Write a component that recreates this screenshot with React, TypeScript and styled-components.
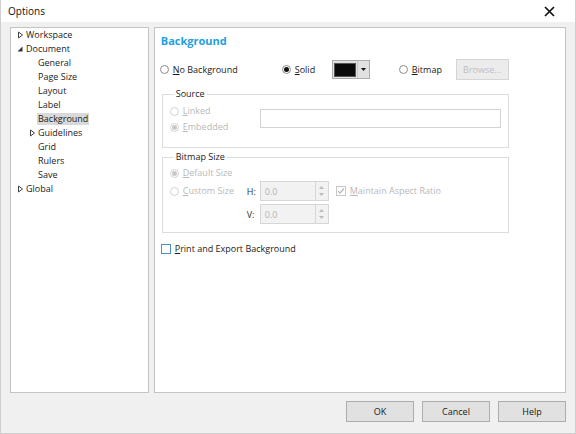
import React from "react";
import styled, { createGlobalStyle } from "styled-components";

const Global = createGlobalStyle`
  html, body { margin: 0; padding: 0; background: #ffffff; }
  * { box-sizing: border-box; }
  body { font-family: "Open Sans", "Noto Sans", sans-serif; font-size: 9px; color: #1a1a1a; }
`;

const Window = styled.div`
  width: 576px;
  height: 434px;
  border: 1px solid #cfcfcf;
  border-top: none;
  display: flex;
  flex-direction: column;
  background: #f0f0f0;
`;

const TitleBar = styled.div`
  height: 22px;
  background: #ffffff;
  display: flex;
  align-items: center;
  justify-content: space-between;
  padding: 0 20px 0 7px;
  font-size: 10px;
  color: #111;
`;

const Body = styled.div`
  display: flex;
  gap: 5px;
  padding: 5px 9px 0 9px;
  height: 371px;
`;

const Panel = styled.div<{ $w: number }>`
  width: ${(p) => p.$w}px;
  height: 366px;
  background: #ffffff;
  border: 1px solid #c4c4c4;
`;

const TreeList = styled.div`
  display: flex;
  flex-direction: column;
`;

const TreeRow = styled.div<{ $level: number }>`
  height: 14px;
  display: flex;
  align-items: center;
  padding-left: ${(p) => (p.$level === 0 ? 6 : 18)}px;
`;

const Twisty = styled.span`
  width: 6px;
  height: 14px;
  display: inline-flex;
  align-items: center;
  justify-content: center;
  margin-right: 2px;
`;

const Spacer = styled.span`
  width: 8px;
`;

const TreeLabel = styled.span<{ $sel?: boolean }>`
  line-height: 12px;
  padding: 0 1px;
  background: ${(p) => (p.$sel ? "#d9d9d9" : "transparent")};
`;

const Content = styled.div`
  display: flex;
  flex-direction: column;
  padding: 6px 6px 0 6px;
`;

const Heading = styled.div`
  font-size: 11px;
  font-weight: 700;
  color: #1e9fe2;
  line-height: 14px;
`;

const ModeRow = styled.div`
  display: flex;
  align-items: center;
  height: 21px;
  margin-top: 11px;
  margin-left: -1px;
`;

const Choice = styled.label<{ $w?: number; $disabled?: boolean }>`
  display: flex;
  align-items: center;
  gap: 4px;
  ${(p) => (p.$w ? `width: ${p.$w}px;` : "")}
  color: ${(p) => (p.$disabled ? "#b9b9b9" : "#1a1a1a")};
  line-height: 14px;
  white-space: nowrap;
`;

const RadioCircle = styled.span<{ $checked?: boolean; $disabled?: boolean }>`
  width: 9px;
  height: 9px;
  border-radius: 50%;
  border: 1px solid ${(p) => (p.$disabled ? "#d2d2d2" : "#8c8c8c")};
  background: #fff;
  display: inline-flex;
  align-items: center;
  justify-content: center;
  flex: none;
  &::after {
    content: "";
    width: 5px;
    height: 5px;
    border-radius: 50%;
    background: ${(p) => (p.$checked ? (p.$disabled ? "#c8c8c8" : "#111") : "transparent")};
  }
`;

const CheckBox = styled.span<{ $disabled?: boolean; $focus?: boolean }>`
  width: 10px;
  height: 10px;
  border: 1px solid ${(p) => (p.$focus ? "#4f8fc9" : p.$disabled ? "#c8c8c8" : "#8c8c8c")};
  background: #fff;
  display: inline-flex;
  align-items: center;
  justify-content: center;
  flex: none;
`;

const ColorButton = styled.div`
  width: 38px;
  height: 19px;
  border: 1px solid #adadad;
  background: #e1e1e1;
  display: flex;
  align-items: center;
  padding-left: 1px;
`;

const Swatch = styled.div`
  width: 22px;
  height: 14px;
  background: #0a0a0a;
  border: 1px solid #555;
`;

const DropArrow = styled.div`
  flex: 1;
  height: 100%;
  display: flex;
  align-items: center;
  justify-content: center;
  border-left: 1px solid #c9c9c9;
  margin-left: 1px;
`;

const Gap = styled.div<{ $w: number }>`
  width: ${(p) => p.$w}px;
  flex: none;
`;

const DisabledButton = styled.div`
  width: 53px;
  height: 21px;
  border: 1px solid #d5d5d5;
  background: #ececec;
  color: #bdbdbd;
  display: flex;
  align-items: center;
  justify-content: center;
`;

const Group = styled.fieldset<{ $mt: number }>`
  margin: ${(p) => p.$mt}px 0 0 1px;
  width: 347px;
  border: 1px solid #dcdcdc;
  padding: 2px 7px 0 7px;
  min-width: 0;
`;

const Legend = styled.legend`
  padding: 0 2px;
  margin-left: 4px;
  line-height: 14px;
  color: #1a1a1a;
`;

const SourceBody = styled.div`
  display: flex;
  align-items: flex-start;
  height: 44px;
`;

const RadioColumn = styled.div`
  width: 90px;
  display: flex;
  flex-direction: column;
`;

const RadioLine = styled.div`
  height: 16px;
  display: flex;
  align-items: center;
`;

const TextInput = styled.div`
  width: 241px;
  height: 19px;
  margin-top: 6px;
  border: 1px solid #d3d3d3;
  background: #fff;
`;

const SizeGrid = styled.div`
  display: grid;
  grid-template-columns: 77px 13px 69px auto;
  grid-template-rows: 16px 20px 23px;
  align-items: center;
  padding-bottom: 8px;
  margin-top: -1px;
`;

const FullRow = styled.div`
  grid-column: 1 / -1;
  display: flex;
  align-items: center;
`;

const AxisLabel = styled.div<{ $row: number }>`
  grid-column: 2;
  grid-row: ${(p) => p.$row};
  align-self: ${(p) => (p.$row === 3 ? "end" : "center")};
  height: 20px;
  display: flex;
  align-items: center;
  color: #333;
`;

const Spin = styled.div<{ $row: number }>`
  grid-column: 3;
  grid-row: ${(p) => p.$row};
  align-self: ${(p) => (p.$row === 3 ? "end" : "center")};
  height: 20px;
  border: 1px solid #d6d6d6;
  background: #f2f2f2;
  display: flex;
`;

const SpinValue = styled.div`
  flex: 1;
  display: flex;
  align-items: center;
  padding-left: 4px;
  color: #b3b3b3;
`;

const SpinArrows = styled.div`
  width: 13px;
  border-left: 1px solid #d6d6d6;
  display: flex;
  flex-direction: column;
  align-items: center;
  justify-content: space-around;
  padding: 2px 0;
`;

const AspectCell = styled.div`
  grid-column: 4;
  grid-row: 2;
  padding-left: 7px;
`;

const PrintRow = styled.div`
  margin-top: 9px;
`;

const Footer = styled.div`
  display: flex;
  justify-content: flex-end;
  gap: 8px;
  padding: 8px 9px 0 0;
`;

const Button = styled.button`
  width: 68px;
  height: 21px;
  border: 1px solid #adadad;
  background: #e1e1e1;
  font-family: inherit;
  font-size: 9px;
  color: #1a1a1a;
  padding: 0;
`;

const Collapsed = () => (
  <svg width="5" height="8" viewBox="0 0 5 8">
    <path d="M0.5 1 L4.5 4 L0.5 7 Z" fill="none" stroke="#444" strokeWidth="1" />
  </svg>
);

const Expanded = () => (
  <svg width="6" height="6" viewBox="0 0 6 6">
    <path d="M5.5 0.5 L5.5 5.5 L0.5 5.5 Z" fill="#333" />
  </svg>
);

const SmallDown = ({ color = "#111" }: { color?: string }) => (
  <svg width="5" height="3" viewBox="0 0 5 3">
    <path d="M0 0 L5 0 L2.5 3 Z" fill={color} />
  </svg>
);

const SmallUp = ({ color = "#bbb" }: { color?: string }) => (
  <svg width="5" height="3" viewBox="0 0 5 3">
    <path d="M0 3 L5 3 L2.5 0 Z" fill={color} />
  </svg>
);

const Check = ({ color }: { color: string }) => (
  <svg width="8" height="8" viewBox="0 0 8 8">
    <path d="M1 4 L3 6.2 L7 1.5" fill="none" stroke={color} strokeWidth="1.2" />
  </svg>
);

type Node = { label: string; level: number; twisty?: "c" | "e"; sel?: boolean };

const tree: Node[] = [
  { label: "Workspace", level: 0, twisty: "c" },
  { label: "Document", level: 0, twisty: "e" },
  { label: "General", level: 1 },
  { label: "Page Size", level: 1 },
  { label: "Layout", level: 1 },
  { label: "Label", level: 1 },
  { label: "Background", level: 1, sel: true },
  { label: "Guidelines", level: 1, twisty: "c" },
  { label: "Grid", level: 1 },
  { label: "Rulers", level: 1 },
  { label: "Save", level: 1 },
  { label: "Global", level: 0, twisty: "c" },
];

export default function App() {
  return (
    <>
      <Global />
      <Window>
        <TitleBar>
          <span>Options</span>
          <svg width="11" height="11" viewBox="0 0 11 11">
            <path d="M1 1 L10 10 M10 1 L1 10" stroke="#111" strokeWidth="1.7" />
          </svg>
        </TitleBar>
        <Body>
          <Panel $w={139}>
            <TreeList>
              {tree.map((n) => (
                <TreeRow key={n.label} $level={n.level}>
                  {n.twisty ? (
                    <Twisty>{n.twisty === "c" ? <Collapsed /> : <Expanded />}</Twisty>
                  ) : n.level === 1 ? (
                    <Spacer />
                  ) : null}
                  <TreeLabel $sel={n.sel}>{n.label}</TreeLabel>
                </TreeRow>
              ))}
            </TreeList>
          </Panel>
          <Panel $w={413}>
            <Content>
              <Heading>Background</Heading>
              <ModeRow>
                <Choice $w={122}>
                  <RadioCircle />
                  <span><u>N</u>o Background</span>
                </Choice>
                <Choice $w={50}>
                  <RadioCircle $checked />
                  <span><u>S</u>olid</span>
                </Choice>
                <ColorButton>
                  <Swatch />
                  <DropArrow>
                    <SmallDown />
                  </DropArrow>
                </ColorButton>
                <Gap $w={29} />
                <Choice $w={57}>
                  <RadioCircle />
                  <span><u>B</u>itmap</span>
                </Choice>
                <DisabledButton>Browse...</DisabledButton>
              </ModeRow>
              <Group $mt={7}>
                <Legend>Source</Legend>
                <SourceBody>
                  <RadioColumn>
                    <RadioLine>
                      <Choice $disabled>
                        <RadioCircle $disabled />
                        <span><u>L</u>inked</span>
                      </Choice>
                    </RadioLine>
                    <RadioLine>
                      <Choice $disabled>
                        <RadioCircle $disabled $checked />
                        <span><u>E</u>mbedded</span>
                      </Choice>
                    </RadioLine>
                  </RadioColumn>
                  <TextInput />
                </SourceBody>
              </Group>
              <Group $mt={2}>
                <Legend>Bitmap Size</Legend>
                <SizeGrid>
                  <FullRow>
                    <Choice $disabled>
                      <RadioCircle $disabled $checked />
                      <span><u>D</u>efault Size</span>
                    </Choice>
                  </FullRow>
                  <Choice $disabled>
                    <RadioCircle $disabled />
                    <span><u>C</u>ustom Size</span>
                  </Choice>
                  <AxisLabel $row={2}>H:</AxisLabel>
                  <Spin $row={2}>
                    <SpinValue>0.0</SpinValue>
                    <SpinArrows>
                      <SmallUp />
                      <SmallDown color="#bbb" />
                    </SpinArrows>
                  </Spin>
                  <AspectCell>
                    <Choice $disabled>
                      <CheckBox $disabled>
                        <Check color="#b5b5b5" />
                      </CheckBox>
                      <span><u>M</u>aintain Aspect Ratio</span>
                    </Choice>
                  </AspectCell>
                  <AxisLabel $row={3}>V:</AxisLabel>
                  <Spin $row={3}>
                    <SpinValue>0.0</SpinValue>
                    <SpinArrows>
                      <SmallUp />
                      <SmallDown color="#bbb" />
                    </SpinArrows>
                  </Spin>
                </SizeGrid>
              </Group>
              <PrintRow>
                <Choice>
                  <CheckBox $focus />
                  <span><u>P</u>rint and Export Background</span>
                </Choice>
              </PrintRow>
            </Content>
          </Panel>
        </Body>
        <Footer>
          <Button>OK</Button>
          <Button>Cancel</Button>
          <Button>Help</Button>
        </Footer>
      </Window>
    </>
  );
}
